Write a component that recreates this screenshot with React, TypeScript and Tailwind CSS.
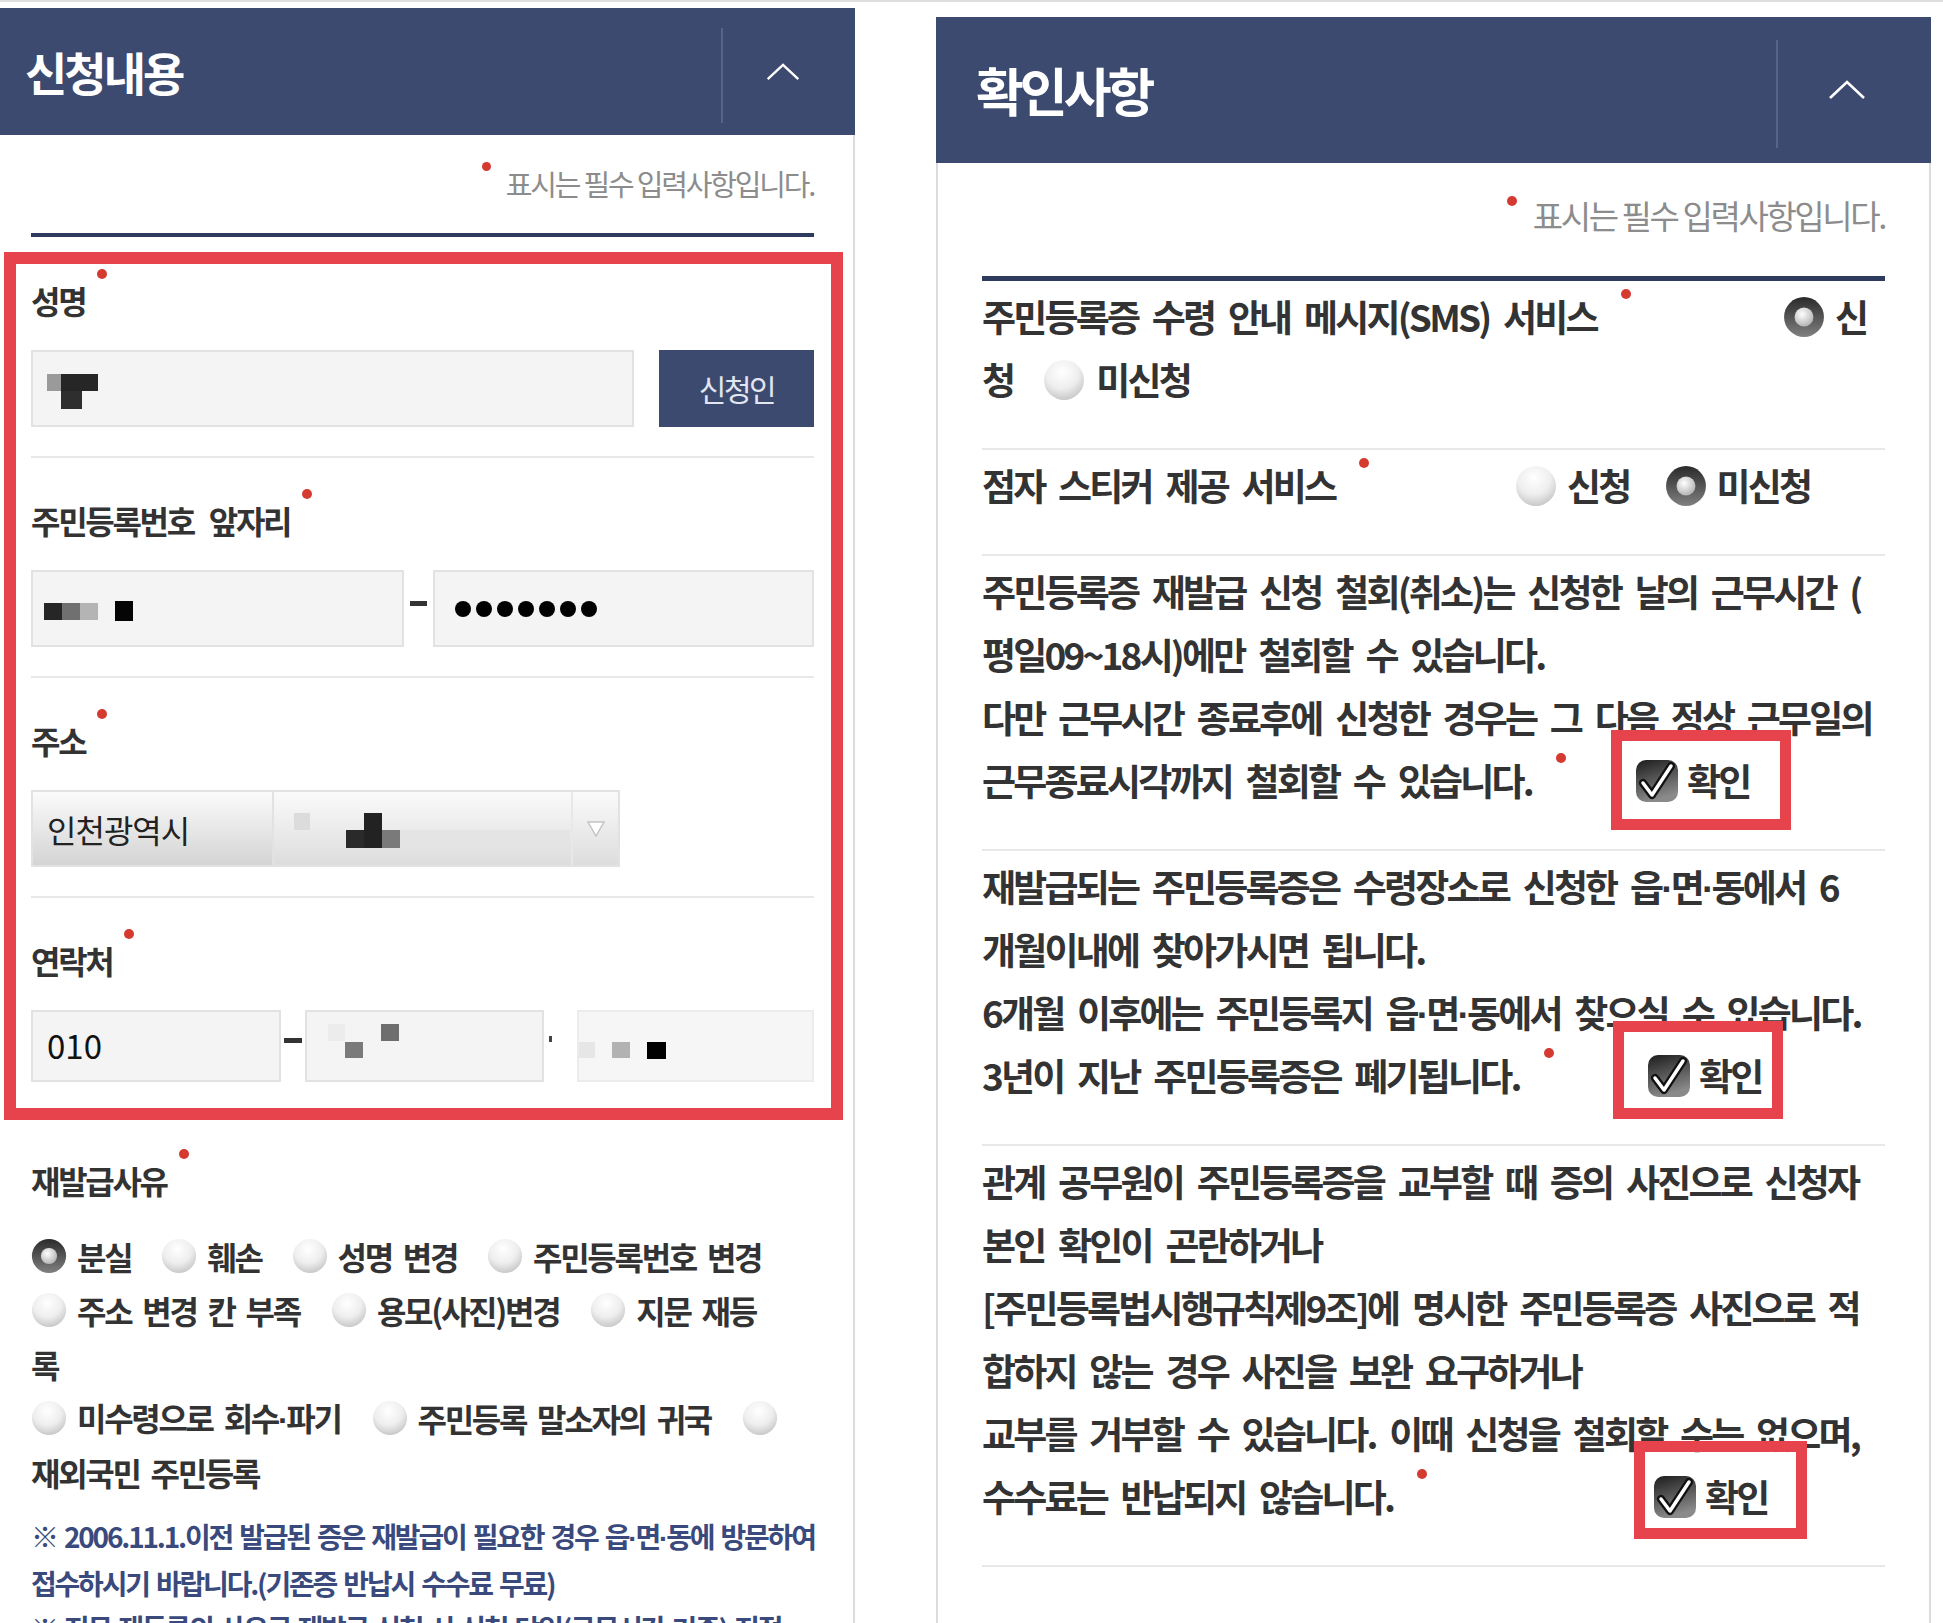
import React from "react";

type Block = [number, number, number, number, string];

// pixelated (redacted) bits of personal data
function Pixels({ blocks, w, h }: { blocks: Block[]; w: number; h: number }) {
  return (
    <svg width={w} height={h} viewBox={`0 0 ${w} ${h}`} className="shrink-0">
      {blocks.map(([x, y, bw, bh, c], i) => (
        <rect key={i} x={x} y={y} width={bw} height={bh} fill={c} />
      ))}
    </svg>
  );
}

// narrow middle dot (the CJK one is full width)
function Txt({ s }: { s: string }) {
  const parts = s.split("·");
  return (
    <>
      {parts.map((p, i) => (
        <React.Fragment key={i}>
          {i > 0 && <span className="font-['Liberation_Sans',sans-serif]">·</span>}
          {p}
        </React.Fragment>
      ))}
    </>
  );
}

function Chevron({ w }: { w: number }) {
  return (
    <svg width={w} height="22" viewBox="0 0 40 22">
      <polyline points="3,19 20,3 37,19" fill="none" stroke="#fff" strokeWidth="2.6" />
    </svg>
  );
}

function Radio({ checked, size }: { checked?: boolean; size: number }) {
  return (
    <svg width={size} height={size} viewBox="0 0 40 40" className="shrink-0">
      <defs>
        <radialGradient id="rOff" cx="45%" cy="30%" r="75%">
          <stop offset="0" stopColor="#ffffff" />
          <stop offset="0.55" stopColor="#eeeeee" />
          <stop offset="1" stopColor="#c2c2c2" />
        </radialGradient>
        <linearGradient id="rOnRing" x1="0" y1="0" x2="0" y2="1">
          <stop offset="0" stopColor="#2a2a2a" />
          <stop offset="1" stopColor="#808080" />
        </linearGradient>
        <radialGradient id="rOnDot" cx="40%" cy="35%" r="70%">
          <stop offset="0" stopColor="#ffffff" />
          <stop offset="1" stopColor="#b0b0b0" />
        </radialGradient>
      </defs>
      {checked ? (
        <>
          <circle cx="20" cy="20" r="19" fill="url(#rOnRing)" />
          <circle cx="20" cy="20" r="9" fill="url(#rOnDot)" />
        </>
      ) : (
        <circle cx="20" cy="20" r="19" fill="url(#rOff)" />
      )}
    </svg>
  );
}

function CheckBox() {
  return (
    <svg width="46" height="46" viewBox="0 0 46 46" className="shrink-0">
      <defs>
        <linearGradient id="cbBg" x1="0" y1="0" x2="0.3" y2="1">
          <stop offset="0" stopColor="#1c1c1c" />
          <stop offset="1" stopColor="#8a8a8a" />
        </linearGradient>
      </defs>
      <rect x="2" y="2" width="42" height="42" rx="10" fill="url(#cbBg)" />
      <path d="M9 25 L18 37 L37 8" fill="none" stroke="#111" strokeWidth="8" strokeLinecap="round" strokeLinejoin="round" />
      <path d="M9 25 L18 37 L37 8" fill="none" stroke="#fff" strokeWidth="3.5" strokeLinecap="round" strokeLinejoin="round" />
    </svg>
  );
}

function Label({ text }: { text: string }) {
  return (
    <div className="flex items-start h-[40px]">
      <span className="text-[32px] leading-[40px] tracking-[-2.3px] [word-spacing:10px] font-semibold whitespace-nowrap">{text}</span>
      <span className="ml-[12px] -mt-[11px] w-[10px] h-[10px] rounded-full bg-[#d43a2f] shrink-0" />
    </div>
  );
}

function Opt({ checked, label }: { checked?: boolean; label?: string }) {
  return (
    <span className="flex items-center">
      <Radio checked={checked} size={36} />
      {label && (
        <span className="ml-[10px] whitespace-nowrap">
          <Txt s={label} />
        </span>
      )}
    </span>
  );
}

function LeftPanel() {
  return (
    <div className="w-[855px] shrink-0 mt-[6px] flex flex-col">
      {/* header */}
      <div className="h-[127px] shrink-0 bg-[#3c4a6f] flex items-center pr-[12px]">
        <div className="flex-1 pl-[25px] text-white text-[46px] font-bold tracking-[-3px]">신청내용</div>
        <div className="w-[2px] h-[95px] mt-[8px] bg-[#56638a]" />
        <div className="w-[120px] flex justify-center">
          <Chevron w={36} />
        </div>
      </div>

      <div className="flex-1 border-r-2 border-[#dcdcdc] pl-[31px] pr-[39px]">
        {/* required note */}
        <div className="flex justify-end items-start mt-[28px] h-[40px]">
          <span className="w-[9px] h-[9px] mt-[-1px] mr-[15px] rounded-full bg-[#d43a2f]" />
          <span className="text-[29px] leading-[40px] tracking-[-2.2px] text-[#8c8c8c]">표시는 필수 입력사항입니다.</span>
        </div>
        <div className="mt-[30px] h-[4px] bg-[#2f3b5e]" />

        {/* fields */}
        <div className="relative">
          <div className="pt-[43px] pb-[29px] border-b-2 border-[#e8e8e8]">
            <Label text="성명" />
            <div className="mt-[30px] flex gap-[25px] h-[77px]">
              <div className="flex-1 flex items-center pl-[12px] bg-[#f4f4f4] border-2 border-[#e2e2e2]">
                <Pixels
                  w={60}
                  h={40}
                  blocks={[
                    [2, 5, 14, 17, "#9a9a9a"],
                    [16, 5, 37, 17, "#262626"],
                    [16, 22, 21, 18, "#2e2e2e"],
                  ]}
                />
              </div>
              <div className="w-[155px] bg-[#3c4a6f] flex items-center justify-center text-[30px] tracking-[-2.5px] text-[#e2e6f0]">
                신청인
              </div>
            </div>
          </div>

          <div className="pt-[42px] pb-[29px] border-b-2 border-[#e8e8e8]">
            <Label text="주민등록번호 앞자리" />
            <div className="mt-[30px] flex items-center h-[77px]">
              <div className="flex-1 h-full flex items-center pl-[11px] bg-[#f4f4f4] border-2 border-[#e2e2e2]">
                <Pixels
                  w={90}
                  h={40}
                  blocks={[
                    [0, 14, 18, 17, "#262626"],
                    [18, 14, 18, 17, "#707070"],
                    [36, 14, 18, 17, "#b4b4b4"],
                    [71, 12, 18, 20, "#050505"],
                  ]}
                />
              </div>
              <div className="w-[17px] h-[5px] mx-[6px] mb-[10px] bg-[#333]" />
              <div className="flex-1 h-full flex items-center gap-[5px] pl-[20px] bg-[#f4f4f4] border-2 border-[#e2e2e2]">
                {[0, 1, 2, 3, 4, 5, 6].map((i) => (
                  <span key={i} className="w-[16px] h-[16px] rounded-full bg-black" />
                ))}
              </div>
            </div>
          </div>

          <div className="pt-[42px] pb-[29px] border-b-2 border-[#e8e8e8]">
            <Label text="주소" />
            <div className="mt-[30px] flex h-[77px]">
              <div className="w-[243px] flex items-center pl-[14px] bg-gradient-to-b from-[#fbfbfb] to-[#d4d4d4] border-2 border-[#e2e2e2] text-[32px] tracking-[-1px] text-[#222]">
                인천광역시
              </div>
              <div className="w-[346px] flex items-center bg-gradient-to-b from-[#fafafa] to-[#dddddd] border-2 border-l-0 border-[#e2e2e2]">
                <div className="flex-1 pl-[17px]">
                  <Pixels
                    w={280}
                    h={42}
                    blocks={[
                      [3, 5, 16, 17, "#dcdcdc"],
                      [109, 22, 170, 18, "#e4e4e4"],
                      [55, 22, 18, 18, "#2a2a2a"],
                      [73, 5, 18, 35, "#222222"],
                      [91, 22, 18, 18, "#7a7a7a"],
                    ]}
                  />
                </div>
                <div className="w-[48px] h-full flex items-center justify-center border-l-2 border-[#e8e8e8]">
                  <svg width="18" height="16" viewBox="0 0 18 16">
                    <polygon points="1,1 17,1 9,15" fill="#fff" stroke="#c4c4c4" strokeWidth="1.5" />
                  </svg>
                </div>
              </div>
            </div>
          </div>

          <div className="pt-[42px] pb-[29px]">
            <Label text="연락처" />
            <div className="mt-[30px] flex items-center h-[72px]">
              <div className="w-[250px] h-full flex items-center pl-[14px] bg-[#f4f4f4] border-2 border-[#e2e2e2] text-[33px] text-[#111]">
                010
              </div>
              <div className="w-[18px] h-[5px] mx-[3px] mb-[12px] bg-[#333]" />
              <div className="w-[239px] h-full flex items-center pl-[18px] bg-[#f4f4f4] border-2 border-[#e2e2e2]">
                <Pixels
                  w={80}
                  h={50}
                  blocks={[
                    [3, 3, 17, 17, "#ececec"],
                    [20, 21, 18, 16, "#7a7a7a"],
                    [56, 3, 18, 17, "#6e6e6e"],
                  ]}
                />
              </div>
              <div className="w-[33px] h-full flex items-center">
                <span className="ml-[5px] mb-[14px] w-[3px] h-[6px] bg-[#444]" />
              </div>
              <div className="flex-1 h-full flex items-center bg-[#f6f6f6] border-2 border-[#ececec]">
                <Pixels
                  w={90}
                  h={50}
                  blocks={[
                    [0, 21, 16, 16, "#e6e6e6"],
                    [33, 21, 18, 16, "#b2b2b2"],
                    [68, 21, 19, 17, "#000000"],
                  ]}
                />
              </div>
            </div>
          </div>

          {/* annotation frame */}
          <div className="absolute left-[-27px] right-[-29px] top-[15px] bottom-[-9px] border-[12px] border-[#e6434d] pointer-events-none" />
        </div>

        {/* reason */}
        <div className="mt-[49px]">
          <Label text="재발급사유" />
        </div>
        <div className="mt-[29px] text-[32px] tracking-[-2.3px] [word-spacing:6px] font-semibold">
          <div className="flex items-center h-[54px] gap-[30px]">
            <Opt checked label="분실" />
            <Opt label="훼손" />
            <Opt label="성명 변경" />
            <Opt label="주민등록번호 변경" />
          </div>
          <div className="flex items-center h-[54px] gap-[31px]">
            <Opt label="주소 변경 칸 부족" />
            <Opt label="용모(사진)변경" />
            <Opt label="지문 재등" />
          </div>
          <div className="flex items-center h-[54px]">록</div>
          <div className="flex items-center h-[54px] gap-[31px]">
            <Opt label="미수령으로 회수·파기" />
            <Opt label="주민등록 말소자의 귀국" />
            <Opt />
          </div>
          <div className="flex items-center h-[54px]">재외국민 주민등록</div>
        </div>

        <div className="mt-[15px] text-[28px] leading-[45px] tracking-[-2.2px] [word-spacing:3px] font-semibold text-[#3a4a7d] whitespace-nowrap">
          <div>
            <Txt s="※ 2006.11.1.이전 발급된 증은 재발급이 필요한 경우 읍·면·동에 방문하여" />
          </div>
          <div>접수하시기 바랍니다.(기존증 반납시 수수료 무료)</div>
          <div>※ 지문 재등록의 사유로 재발급 신청 시 신청 당일(근무시간 기준) 지정</div>
        </div>
      </div>
    </div>
  );
}

function Dot() {
  return <span className="self-start mt-[4px] ml-[24px] w-[10px] h-[10px] rounded-full bg-[#d43a2f] shrink-0" />;
}

function Confirm({ frame }: { frame: string }) {
  return (
    <div className="relative flex items-center">
      <CheckBox />
      <span className="ml-[7px]">확인</span>
      <div className={"absolute border-[11px] border-[#e6434d] pointer-events-none " + frame} />
    </div>
  );
}

function Notice({
  lines,
  last,
  textWidth,
  frame,
}: {
  lines: string[];
  last: string;
  textWidth: string;
  frame: string;
}) {
  return (
    <div className="pt-[4px] pb-[37px] border-b-2 border-[#e8e8e8]">
      {lines.map((l) => (
        <div key={l} className="h-[63px] whitespace-nowrap">
          <Txt s={l} />
        </div>
      ))}
      <div className="flex items-center h-[63px]">
        <div className={"flex items-center h-full shrink-0 " + textWidth}>
          <span className="whitespace-nowrap">{last}</span>
          <Dot />
        </div>
        <Confirm frame={frame} />
      </div>
    </div>
  );
}

function RightPanel() {
  return (
    <div className="ml-[81px] mt-[15px] w-[995px] shrink-0 flex flex-col">
      <div className="h-[146px] shrink-0 bg-[#3c4a6f] flex items-center pr-[15px]">
        <div className="flex-1 pl-[40px] text-white text-[52px] font-bold tracking-[-4px]">확인사항</div>
        <div className="w-[2px] h-[108px] mt-[8px] bg-[#56638a]" />
        <div className="w-[138px] flex justify-center">
          <Chevron w={40} />
        </div>
      </div>

      <div className="flex-1 border-x-2 border-[#dcdcdc] px-[44px]">
        <div className="flex justify-end items-start mt-[32px] h-[40px]">
          <span className="w-[10px] h-[10px] mt-[1px] mr-[16px] rounded-full bg-[#d43a2f]" />
          <span className="text-[33px] leading-[40px] tracking-[-2.4px] text-[#8c8c8c]">표시는 필수 입력사항입니다.</span>
        </div>
        <div className="mt-[41px] h-[5px] bg-[#2f3b5e]" />

        <div className="text-[37px] leading-[63px] tracking-[-2.8px] [word-spacing:8px] font-semibold">
          <div className="pt-[4px] pb-[37px] border-b-2 border-[#e8e8e8]">
            <div className="flex items-center h-[63px]">
              <div className="w-[801px] shrink-0 h-full flex items-center">
                <span className="whitespace-nowrap">주민등록증 수령 안내 메시지(SMS) 서비스</span>
                <Dot />
              </div>
              <Radio checked size={42} />
              <span className="ml-[10px]">신</span>
            </div>
            <div className="flex items-center h-[63px]">
              <span>청</span>
              <span className="ml-[30px] flex">
                <Radio size={42} />
              </span>
              <span className="ml-[11px]">미신청</span>
            </div>
          </div>

          <div className="pt-[4px] pb-[37px] border-b-2 border-[#e8e8e8]">
            <div className="flex items-center h-[63px]">
              <div className="w-[533px] shrink-0 h-full flex items-center">
                <span className="whitespace-nowrap">점자 스티커 제공 서비스</span>
                <Dot />
              </div>
              <Radio size={42} />
              <span className="ml-[10px]">신청</span>
              <span className="ml-[36px] flex">
                <Radio checked size={42} />
              </span>
              <span className="ml-[9px]">미신청</span>
            </div>
          </div>

          <Notice
            lines={[
              "주민등록증 재발급 신청 철회(취소)는 신청한 날의 근무시간 (",
              "평일09~18시)에만 철회할 수 있습니다.",
              "다만 근무시간 종료후에 신청한 경우는 그 다음 정상 근무일의",
            ]}
            last="근무종료시각까지 철회할 수 있습니다."
            textWidth="w-[652px]"
            frame="left-[-23px] top-[-19px] w-[180px] h-[100px]"
          />
          <Notice
            lines={[
              "재발급되는 주민등록증은 수령장소로 신청한 읍·면·동에서 6",
              "개월이내에 찾아가시면 됩니다.",
              "6개월 이후에는 주민등록지 읍·면·동에서 찾으실 수 있습니다.",
            ]}
            last="3년이 지난 주민등록증은 폐기됩니다."
            textWidth="w-[664px]"
            frame="left-[-33px] top-[-23px] w-[170px] h-[98px]"
          />
          <Notice
            lines={[
              "관계 공무원이 주민등록증을 교부할 때 증의 사진으로 신청자",
              "본인 확인이 곤란하거나",
              "[주민등록법시행규칙제9조]에 명시한 주민등록증 사진으로 적",
              "합하지 않는 경우 사진을 보완 요구하거나",
              "교부를 거부할 수 있습니다. 이때 신청을 철회할 수는 없으며,",
            ]}
            last="수수료는 반납되지 않습니다."
            textWidth="w-[670px]"
            frame="left-[-18px] top-[-24px] w-[173px] h-[98px]"
          />
        </div>
      </div>
    </div>
  );
}

export default function App() {
  return (
    <div className="w-[1943px] h-[1623px] overflow-hidden bg-white font-['Noto_Sans_CJK_KR','Noto_Sans_CJK_SC',sans-serif] text-[#333]">
      <div className="h-[2px] bg-[#dedede]" />
      <div className="flex items-stretch h-[1621px]">
        <LeftPanel />
        <RightPanel />
      </div>
    </div>
  );
}
